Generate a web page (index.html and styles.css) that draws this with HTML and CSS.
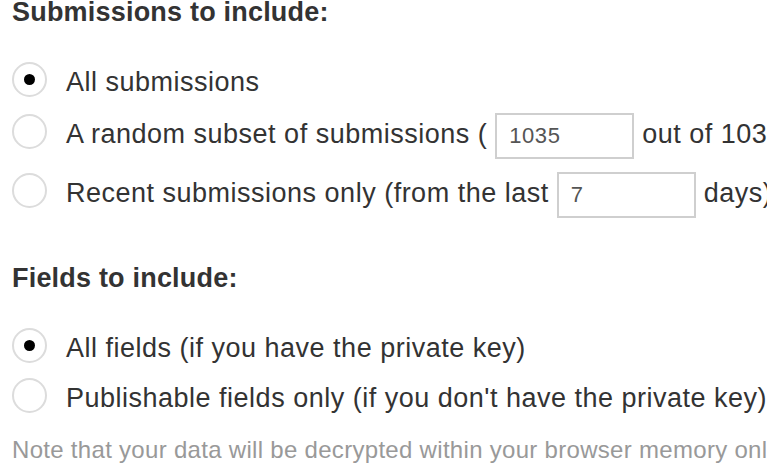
FILE: index.html
```html
<!DOCTYPE html>
<html>
<head>
<meta charset="utf-8">
<link rel="stylesheet" href="styles.css">
</head>
<body>
<div class="page">
  <h3 class="heading">Submissions to include:</h3>
  <label class="row row-first"><span class="radio checked"></span>All submissions</label>
  <label class="row row-sub"><span class="radio"></span>A random subset of submissions ( <input class="field" type="text" value="1035"> out of 1035 submissions)</label>
  <label class="row row-recent"><span class="radio"></span>Recent submissions only (from the last <input class="field" type="text" value="7"> days)</label>

  <h3 class="heading heading-fields">Fields to include:</h3>
  <label class="row row-first"><span class="radio checked"></span>All fields (if you have the private key)</label>
  <label class="row"><span class="radio"></span>Publishable fields only (if you don't have the private key)</label>

  <p class="note">Note that your data will be decrypted within your browser memory only, and never sent to our servers.</p>
</div>
</body>
</html>
```

FILE: styles.css
```css
html, body {
  margin: 0;
  padding: 0;
  overflow: hidden;
  background: #ffffff;
}

body {
  font-family: "Liberation Sans", Arial, Helvetica, sans-serif;
  color: #333333;
  font-size: 27px;
}

.page {
  padding-left: 12px;
  white-space: nowrap;
  letter-spacing: 0.5px;
}

.heading {
  margin: 0;
  font-size: 27px;
  font-weight: bold;
  line-height: 24px;
  letter-spacing: 0.2px;
  color: #333333;
}

.heading-fields {
  margin-top: 48px;
}

.row {
  display: block;
  line-height: 50px;
}

.row-first {
  margin-top: 33px;
}

.row-sub {
  margin-top: 2px;
}

.row-recent {
  margin-top: 9px;
}

.radio {
  display: inline-block;
  box-sizing: border-box;
  width: 35px;
  height: 35px;
  border: 2px solid #dcdcdc;
  border-radius: 50%;
  margin-right: 19px;
  vertical-align: -6px;
  position: relative;
  background: #ffffff;
}

.radio.checked::after {
  content: "";
  position: absolute;
  left: 50%;
  top: 50%;
  width: 11px;
  height: 11px;
  margin: -5.5px 0 0 -5.5px;
  border-radius: 50%;
  background: #000000;
}

.field {
  box-sizing: border-box;
  width: 139px;
  height: 46px;
  border: 2px solid #cfcfcf;
  border-radius: 0;
  padding: 0 12px;
  font-family: "Liberation Sans", Arial, Helvetica, sans-serif;
  font-size: 22px;
  letter-spacing: 0.6px;
  color: #555555;
  background: #ffffff;
  outline: none;
}

.note {
  margin: 12px 0 0;
  line-height: 30px;
  font-size: 24px;
  letter-spacing: 0.3px;
  color: #999999;
}
```
